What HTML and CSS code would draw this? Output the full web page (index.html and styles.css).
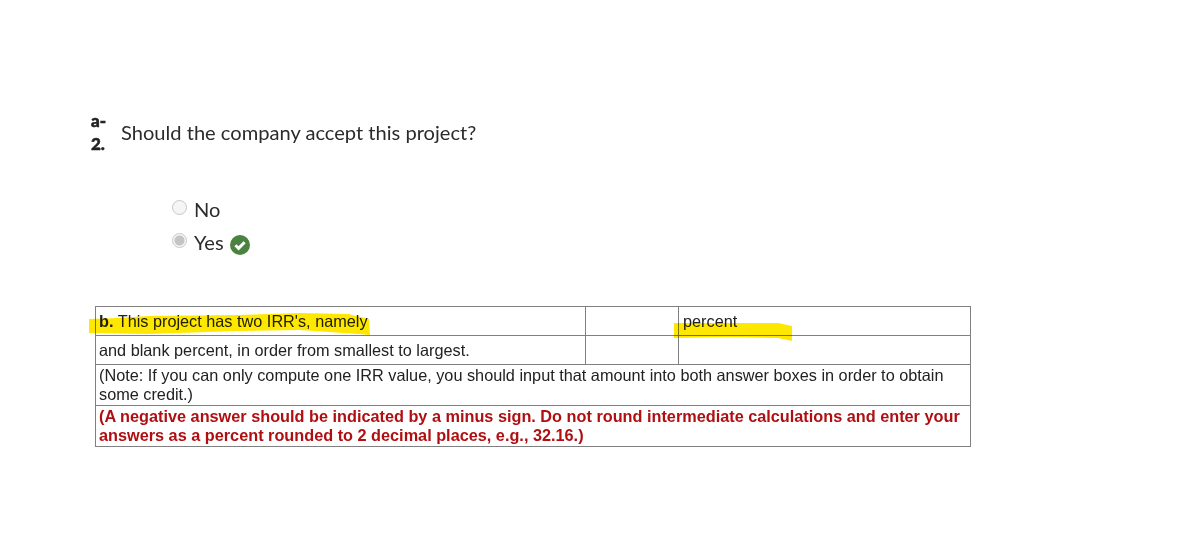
FILE: index.html
```html
<!DOCTYPE html>
<html lang="en">
<head>
<meta charset="utf-8">
<title>Question</title>
<link rel="stylesheet" href="styles.css">
</head>
<body>
<main class="page">
  <section class="question">
    <div class="num">a-<br>2.</div>
    <p class="prompt">Should the company accept this project?</p>
  </section>
  <ul class="options">
    <li class="option"><span class="radio"></span><span>No</span></li>
    <li class="option"><span class="radio checked"></span><span>Yes</span>
      <svg class="tick" viewBox="0 0 20 20" width="20" height="20" aria-hidden="true"><circle cx="10" cy="10" r="10" fill="#4a8240"/><path d="M5.4 10.2l3.2 3.2 6-6.2" fill="none" stroke="#fff" stroke-width="3"/></svg>
    </li>
  </ul>
  <div class="table-wrap">
    <table class="answers">
      <colgroup><col class="c1"><col class="c2"><col class="c3"></colgroup>
      <tr class="r1"><td><b>b.</b> This project has two IRR's, namely</td><td></td><td>percent</td></tr>
      <tr class="r2"><td>and blank percent, in order from smallest to largest.</td><td></td><td></td></tr>
      <tr><td colspan="3">(Note: If you can only compute one IRR value, you should input that amount into both answer boxes in order to obtain some credit.)</td></tr>
      <tr><td colspan="3" class="warn">(A negative answer should be indicated by a minus sign. Do not round intermediate calculations and enter your answers as a percent rounded to 2 decimal places, e.g., 32.16.)</td></tr>
    </table>
    <svg class="marker" width="710" height="40" viewBox="0 0 710 40" aria-hidden="true">
      <path d="M1 13 L30 12 L60 10 L150 9 L212 7 L260 8 L281 13 L282 29 L270 28 L212 24 L150 25 L60 28 L1 27Z" fill="#ffe800"/>
      <path d="M586 17 L640 17 L690 17 L704 20 L704 35 L690 32 L640 31 L586 32Z" fill="#ffe800"/>
    </svg>
  </div>
</main>
</body>
</html>
```
FILE: styles.css
```css
* { box-sizing: border-box; }
html, body { margin: 0; padding: 0; background: #fff; }
body { width: 1204px; height: 545px; overflow: hidden; font-family: "Lato", "Liberation Sans", sans-serif; color: #2b2b2b; }
.page { padding: 112px 0 0 91px; }
.question { display: flex; align-items: center; height: 39px; }
.num { width: 30px; font-size: 17px; font-weight: 900; line-height: 23px; color: #222; -webkit-text-stroke: 0.5px #222; }
.prompt { margin: 0 0 0; font-size: 20.1px; line-height: 26px; }
.options { list-style: none; margin: 45px 0 0 81px; padding: 0; display: flex; flex-direction: column; gap: 7px; }
.option { display: flex; align-items: center; height: 26px; font-size: 20.1px; }
.radio { width: 15px; height: 15px; margin: -4px 7px 0 0; border: 1px solid #c8c8c8; border-radius: 50%; background: #f5f5f5; }
.radio.checked { background: radial-gradient(circle, #c4c4c4 0 4.5px, #f5f5f5 5.5px); }
.tick { margin: 5px 0 0 6px; }
.table-wrap { position: relative; margin: 51px 0 0 4px; width: 875px; }
.answers { width: 875px; table-layout: fixed; border-collapse: collapse; font-family: "Liberation Sans", Arial, sans-serif; font-size: 16.28px; line-height: 19px; color: #222; }
.c1 { width: 490px; } .c2 { width: 93px; } .c3 { width: 292px; }
.answers td { border: 1px solid #808080; padding: 1px 3px 1px 3px; vertical-align: middle; height: 41px; }
.answers .r1 td { height: 29px; padding-top: 1px; padding-left: 4px; }
.answers .r1 td:first-child { padding-left: 3px; }
.answers .r2 td { height: 29px; padding-top: 1px; }
.warn { color: #b00f12; font-weight: 700; }
.marker { position: absolute; left: -7px; top: 0; mix-blend-mode: multiply; pointer-events: none; }
```
